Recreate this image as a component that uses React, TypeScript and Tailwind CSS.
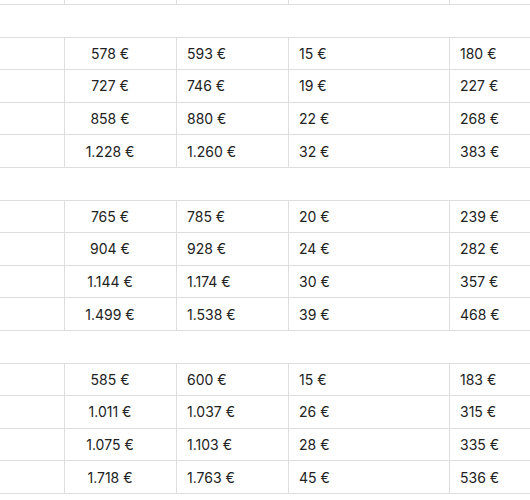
const sections: string[][][] = [
  [
    ['578 €', '593 €', '15 €', '180 €'],
    ['727 €', '746 €', '19 €', '227 €'],
    ['858 €', '880 €', '22 €', '268 €'],
    ['1.228 €', '1.260 €', '32 €', '383 €'],
  ],
  [
    ['765 €', '785 €', '20 €', '239 €'],
    ['904 €', '928 €', '24 €', '282 €'],
    ['1.144 €', '1.174 €', '30 €', '357 €'],
    ['1.499 €', '1.538 €', '39 €', '468 €'],
  ],
  [
    ['585 €', '600 €', '15 €', '183 €'],
    ['1.011 €', '1.037 €', '26 €', '315 €'],
    ['1.075 €', '1.103 €', '28 €', '335 €'],
    ['1.718 €', '1.763 €', '45 €', '536 €'],
  ],
]

function Row({ cells }: { cells: string[] }) {
  return (
    <div className="flex h-[32.6px] border-b border-[#dedede] items-stretch">
      <div className="w-[64px] shrink-0" />
      <div className="w-[112px] shrink-0 border-l border-[#dedede] flex items-center justify-center pr-[21px]">
        {cells[0]}
      </div>
      <div className="w-[112px] shrink-0 border-l border-[#dedede] flex items-center pl-[10px]">{cells[1]}</div>
      <div className="w-[161px] shrink-0 border-l border-[#dedede] flex items-center pl-[10px]">{cells[2]}</div>
      <div className="w-[120px] shrink-0 border-l border-[#dedede] flex items-center pl-[10px]">{cells[3]}</div>
    </div>
  )
}

export default function App() {
  return (
    <div
      className="w-[530px] h-[500px] overflow-hidden bg-white text-[14px] text-[#222]"
      style={{ fontFamily: 'Inter, "Open Sans", sans-serif' }}
    >
      <div className="w-[580px]">
        <div className="flex h-[5px] border-b border-[#dedede]">
          <div className="w-[64px] shrink-0" />
          <div className="w-[112px] shrink-0 border-l border-[#dedede]" />
          <div className="w-[112px] shrink-0 border-l border-[#dedede]" />
          <div className="w-[161px] shrink-0 border-l border-[#dedede]" />
          <div className="w-[120px] shrink-0 border-l border-[#dedede]" />
        </div>
        {sections.map((rows, i) => (
          <div key={i}>
            <div className="h-[32.6px] border-b border-[#dedede]" />
            {rows.map((r, j) => (
              <Row key={j} cells={r} />
            ))}
          </div>
        ))}
      </div>
    </div>
  )
}
